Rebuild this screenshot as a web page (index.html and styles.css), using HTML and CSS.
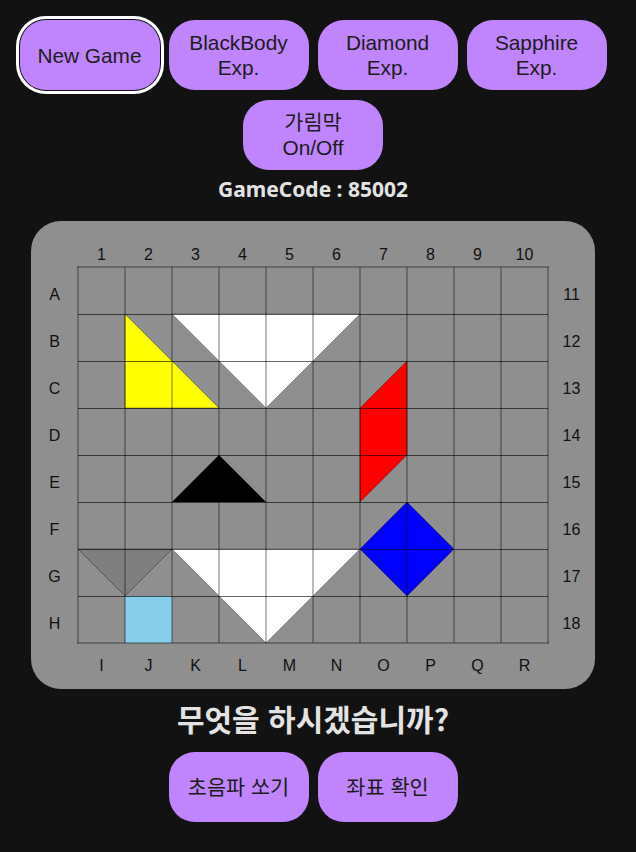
FILE: index.html
```html
<!DOCTYPE html>
<html lang="ko">
<head>
<meta charset="utf-8">
<title>Game</title>
<link rel="stylesheet" href="styles.css">
</head>
<body>
<div class="app">
  <div class="menu">
    <button class="btn focused">New Game</button>
    <button class="btn">BlackBody<br>Exp.</button>
    <button class="btn">Diamond<br>Exp.</button>
    <button class="btn">Sapphire<br>Exp.</button>
    <button class="btn">가림막<br>On/Off</button>
  </div>
  <div class="code">GameCode : 85002</div>
  <div class="board">
    <div class="corner tl"></div>
    <div class="corner bl"></div>
    <div class="lbl top">1</div><div class="lbl top">2</div><div class="lbl top">3</div><div class="lbl top">4</div><div class="lbl top">5</div><div class="lbl top">6</div><div class="lbl top">7</div><div class="lbl top">8</div><div class="lbl top">9</div><div class="lbl top">10</div>
    <div class="lbl left r1">A</div><div class="lbl left r2">B</div><div class="lbl left r3">C</div><div class="lbl left r4">D</div><div class="lbl left r5">E</div><div class="lbl left r6">F</div><div class="lbl left r7">G</div><div class="lbl left r8">H</div>
    <div class="lbl right r1">11</div><div class="lbl right r2">12</div><div class="lbl right r3">13</div><div class="lbl right r4">14</div><div class="lbl right r5">15</div><div class="lbl right r6">16</div><div class="lbl right r7">17</div><div class="lbl right r8">18</div>
    <svg class="field" width="470" height="376" viewBox="0 0 470 376">
      <polygon points="47,47 47,141 141,141" fill="#ffff00" stroke="rgba(0,0,0,0.35)" stroke-width="1"/>
      <polygon points="94,47 282,47 188,141" fill="#ffffff" stroke="rgba(0,0,0,0.3)" stroke-width="1"/>
      <polygon points="329,94 329,188 282,235 282,141" fill="#ff0000" stroke="rgba(0,0,0,0.3)" stroke-width="1"/>
      <polygon points="141,188 94,235 188,235" fill="#000000"/>
      <polygon points="329,235 376,282 329,329 282,282" fill="#0000ff" stroke="rgba(0,0,0,0.35)" stroke-width="1"/>
      <polygon points="0,282 94,282 47,329" fill="#7f7f7f" stroke="rgba(0,0,0,0.35)" stroke-width="1"/>
      <polygon points="94,282 282,282 188,376" fill="#ffffff" stroke="rgba(0,0,0,0.3)" stroke-width="1"/>
      <rect x="47" y="329" width="47" height="47" fill="#87ceeb"/>
      <g stroke="rgba(0,0,0,0.6)" stroke-width="1">
        <line x1="0" y1="47.5" x2="470" y2="47.5"/>
        <line x1="0" y1="94.5" x2="470" y2="94.5"/>
        <line x1="0" y1="141.5" x2="470" y2="141.5"/>
        <line x1="0" y1="188.5" x2="470" y2="188.5"/>
        <line x1="0" y1="235.5" x2="470" y2="235.5"/>
        <line x1="0" y1="282.5" x2="470" y2="282.5"/>
        <line x1="0" y1="329.5" x2="470" y2="329.5"/>
      </g>
      <g stroke="rgba(0,0,0,0.27)" stroke-width="2">
        <line x1="0" y1="0" x2="0" y2="376"/>
        <line x1="47" y1="0" x2="47" y2="376"/>
        <line x1="94" y1="0" x2="94" y2="376"/>
        <line x1="141" y1="0" x2="141" y2="376"/>
        <line x1="188" y1="0" x2="188" y2="376"/>
        <line x1="235" y1="0" x2="235" y2="376"/>
        <line x1="282" y1="0" x2="282" y2="376"/>
        <line x1="329" y1="0" x2="329" y2="376"/>
        <line x1="376" y1="0" x2="376" y2="376"/>
        <line x1="423" y1="0" x2="423" y2="376"/>
        <line x1="470" y1="0" x2="470" y2="376"/>
        <line x1="-1" y1="0" x2="471" y2="0"/>
        <line x1="-1" y1="376" x2="471" y2="376"/>
      </g>
    </svg>
    <div class="lbl bottom">I</div><div class="lbl bottom">J</div><div class="lbl bottom">K</div><div class="lbl bottom">L</div><div class="lbl bottom">M</div><div class="lbl bottom">N</div><div class="lbl bottom">O</div><div class="lbl bottom">P</div><div class="lbl bottom">Q</div><div class="lbl bottom">R</div>
  </div>
  <h2 class="question">무엇을 하시겠습니까?</h2>
  <div class="actions">
    <button class="btn">초음파 쏘기</button>
    <button class="btn">좌표 확인</button>
  </div>
</div>
</body>
</html>
```

FILE: styles.css
```css
html, body {
  margin: 0;
  padding: 0;
  background: #121212;
}

.app {
  width: 626px;
  padding-top: 20px;
  display: flex;
  flex-direction: column;
  align-items: center;
  font-family: "Liberation Sans", Arial, "Noto Sans CJK KR", sans-serif;
}

.menu {
  width: 626px;
  display: flex;
  flex-wrap: wrap;
  justify-content: center;
  gap: 10px 9px;
}

.btn {
  width: 140px;
  height: 70px;
  padding: 0;
  border: none;
  border-radius: 26px;
  background: #c084fc;
  color: #1c1c1c;
  font-family: "Liberation Sans", Arial, "Noto Sans CJK KR", sans-serif;
  font-size: 20.8px;
  line-height: 25px;
  text-align: center;
  cursor: pointer;
}

.btn.focused {
  box-shadow: 0 0 0 1px #121212, 0 0 0 4px #ffffff;
}

.code {
  margin-top: 7px;
  font-family: "Noto Sans", "Open Sans", sans-serif;
  font-weight: 700;
  font-size: 21px;
  line-height: 25px;
  color: #e3e3e3;
}

.board {
  margin-top: 19px;
  display: grid;
  grid-template-columns: 47px repeat(10, 47px) 47px;
  grid-template-rows: 46px repeat(8, 47px) 46px;
  background: #8f8f8f;
  border-radius: 30px;
}

.corner.tl {
  grid-row: 1;
  grid-column: 1;
}

.corner.bl {
  grid-row: 10;
  grid-column: 1;
}

.lbl {
  display: flex;
  justify-content: center;
  align-items: center;
  font-size: 16px;
  line-height: 16px;
  color: #111111;
}

.lbl.top {
  grid-row: 1;
  padding-top: 21px;
}

.lbl.left {
  grid-column: 1;
  padding-top: 9px;
}

.lbl.right {
  grid-column: 12;
  padding-top: 9px;
}

.lbl.bottom {
  grid-row: 10;
}

.r1 { grid-row: 2; }
.r2 { grid-row: 3; }
.r3 { grid-row: 4; }
.r4 { grid-row: 5; }
.r5 { grid-row: 6; }
.r6 { grid-row: 7; }
.r7 { grid-row: 8; }
.r8 { grid-row: 9; }

.field {
  grid-row: 2 / 10;
  grid-column: 2 / 12;
  display: block;
  overflow: visible;
}

.question {
  margin: 11px 0 0;
  font-family: "Noto Sans CJK KR", sans-serif;
  font-weight: 700;
  font-size: 30px;
  line-height: 36px;
  color: #e3e3e3;
}

.actions {
  margin-top: 16px;
  display: flex;
  gap: 9px;
}
```
